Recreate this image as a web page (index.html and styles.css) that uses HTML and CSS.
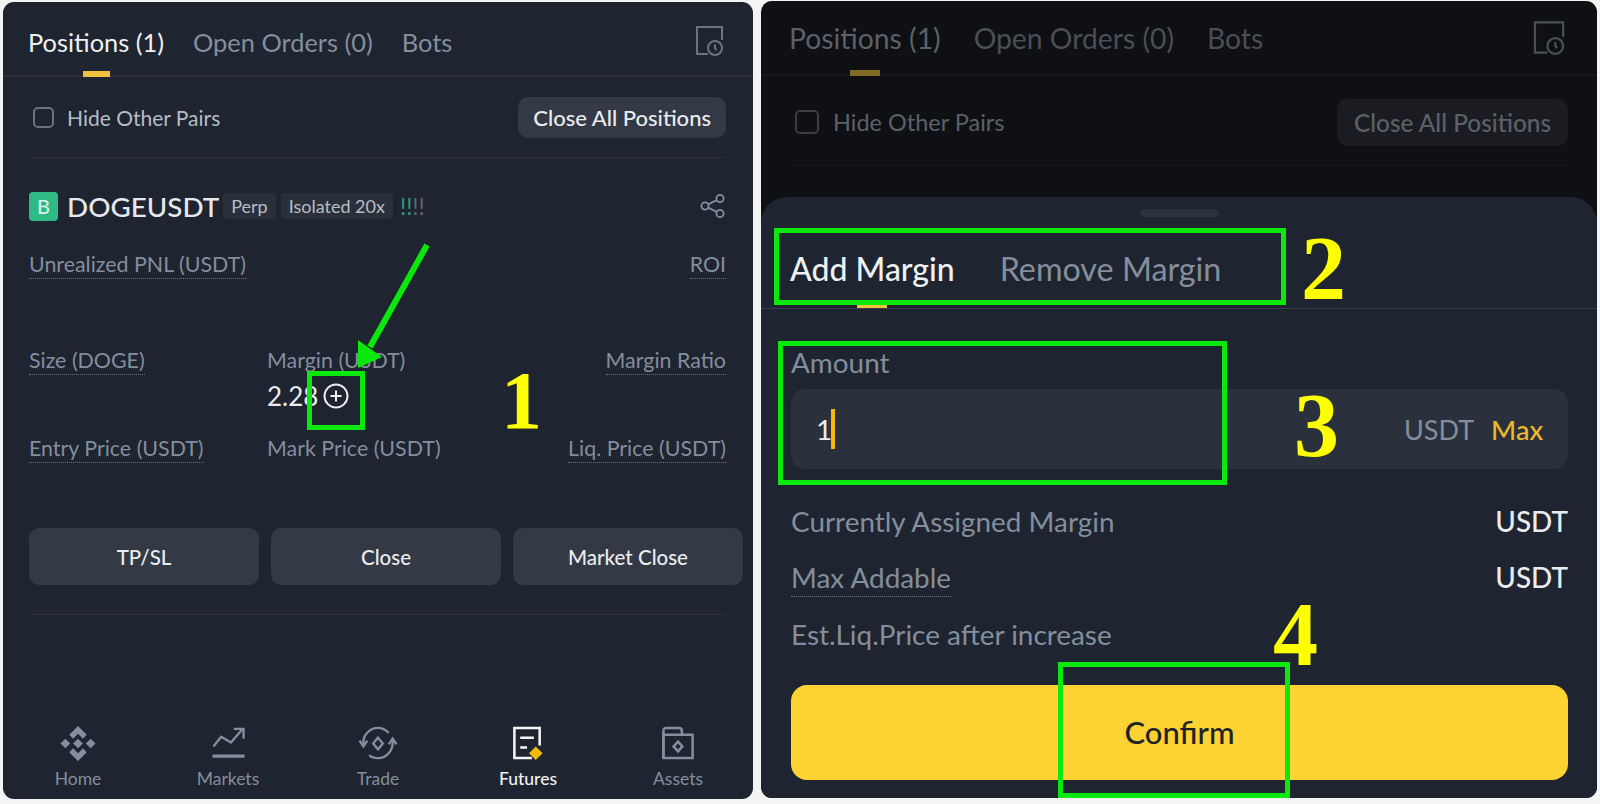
FILE: index.html
```html
<!DOCTYPE html>
<html lang="en">
	<head>
		<meta charset="UTF-8" />
		<title>Add margin to a futures position</title>
		<link rel="stylesheet" href="styles.css">
	</head>
	<body>
		<div class="shots">
			<!-- left phone: positions list -->
			<div class="panel panelLeft">
				<div class="tabs">
					<span class="tab active">Positions (1)</span>
					<span class="tab">Open Orders (0)</span>
					<span class="tab">Bots</span>
					<svg class="histIcon" width="28" height="31" viewBox="0 0 28 31" fill="none" stroke="#6b7380" stroke-width="2"><path d="M13 29H2V2H27V15"/><circle cx="20" cy="23" r="7"/><path d="M20 19.500v3.500l1.500 2"/></svg>
				</div>
				<div class="toolbar">
					<label class="hide"><span class="check"></span>Hide Other Pairs</label>
					<span class="closeAll">Close All Positions</span>
				</div>
				<div class="symbol">
					<span class="badge">B</span>
					<span class="pair">DOGEUSDT</span>
					<span class="tag">Perp</span>
					<span class="tag">Isolated 20x</span>
					<span class="risk"><i>!</i><i>!</i><b>!</b><b>!</b></span>
					<svg class="share" width="25" height="24" viewBox="0 0 25 24" fill="none" stroke="#848e9c" stroke-width="1.8"><circle cx="5" cy="12" r="3.6"/><circle cx="20" cy="4.5" r="3.6"/><circle cx="20" cy="19.5" r="3.6"/><path d="M8.2 10.4l8.6-4.3M8.2 13.6l8.6 4.3"/></svg>
				</div>
				<div class="stats">
					<div><span class="lbl dot">Unrealized PNL (USDT)</span></div>
					<div></div>
					<div class="right"><span class="lbl dot">ROI</span></div>
					<div><span class="lbl dot">Size (DOGE)</span></div>
					<div>
						<span class="lbl">Margin (USDT)</span>
						<div class="val">2.28<svg width="26" height="26" viewBox="0 0 26 26" fill="none" stroke="#eaecef" stroke-width="2"><circle cx="13" cy="13" r="11.5"/><path d="M13 7.5v11M7.5 13h11"/></svg></div>
					</div>
					<div class="right"><span class="lbl dot">Margin Ratio</span></div>
					<div><span class="lbl dot">Entry Price (USDT)</span></div>
					<div><span class="lbl">Mark Price (USDT)</span></div>
					<div class="right"><span class="lbl dot">Liq. Price (USDT)</span></div>
				</div>
				<div class="actions">
					<span class="action">TP/SL</span>
					<span class="action">Close</span>
					<span class="action">Market Close</span>
				</div>
				<div class="rule"></div>
				<div class="nav">
					<div class="navItem">
						<svg width="36" height="35" viewBox="0 0 36 36" fill="#848e9c"><path d="M18 0l9 9-4 4-5-5-5 5-4-4zM18 36l-9-9 4-4 5 5 5-5 4 4zM18 13l5 5-5 5-5-5zM5 13l5 5-5 5-5-5zM31 13l5 5-5 5-5-5z"/></svg>
						<span>Home</span>
					</div>
					<div class="navItem">
						<svg width="36" height="35" viewBox="0 0 36 36" fill="none" stroke="#848e9c" stroke-width="2.4"><path d="M3 21l8-10 10 6 12-14"/><path d="M24 3h10v10"/><path d="M2 31h33" stroke-width="3.2"/></svg>
						<span>Markets</span>
					</div>
					<div class="navItem">
						<svg width="40" height="35" viewBox="0 0 40 36" fill="none" stroke="#848e9c" stroke-width="2.4"><path d="M5 19C4 9 12 2 20 2c5 0 8 2 11 5"/><path d="M35 15c1 10-6 18-15 18-4 0-7-1-9-3"/><path d="M1 15l4 6 4-6M31 19l4-6 4 6"/><path d="M20 12l5 6-5 6-5-6z"/></svg>
						<span>Trade</span>
					</div>
					<div class="navItem on">
						<svg width="32" height="35" viewBox="0 0 32 36" fill="none" stroke="#f5f5f5" stroke-width="2.6"><path d="M20 33H2V2H28V20"/><path d="M8 12h14M8 22h7"/><path d="M24 21l7 7-7 7-7-7z" fill="#f0b90b" stroke="none"/></svg>
						<span>Futures</span>
					</div>
					<div class="navItem">
						<svg width="34" height="35" viewBox="0 0 34 36" fill="none" stroke="#848e9c" stroke-width="2.6"><path d="M2 33V5c0-2 1-3 3-3h13c2 0 3 1 3 3v4"/><path d="M2 9h30v24H2z"/><path d="M17 16l4.500 5-4.500 5-4.500-5z"/></svg>
						<span>Assets</span>
					</div>
				</div>
			</div>

			<!-- right phone: add margin sheet over the dimmed list -->
			<div class="panel panelRight">
				<div class="tabs">
					<span class="tab active">Positions (1)</span>
					<span class="tab">Open Orders (0)</span>
					<span class="tab">Bots</span>
					<svg class="histIcon" width="33" height="35" viewBox="0 0 28 31" fill="none" stroke="#4a4e55" stroke-width="2"><path d="M13 29H2V2H27V15"/><circle cx="20" cy="23" r="7"/><path d="M20 19.500v3.500l1.500 2"/></svg>
				</div>
				<div class="toolbar">
					<label class="hide"><span class="check"></span>Hide Other Pairs</label>
					<span class="closeAll">Close All Positions</span>
				</div>
				<div class="sheet">
					<div class="handle"></div>
					<div class="sheetTabs">
						<span class="sheetTab active">Add Margin</span>
						<span class="sheetTab">Remove Margin</span>
					</div>
					<div class="sheetBody">
						<div class="amountLbl">Amount</div>
						<div class="amount">
							<span class="typed">1</span><span class="caret"></span>
							<span class="unit">USDT</span>
							<span class="max">Max</span>
						</div>
						<div class="rows">
							<div class="row"><span>Currently Assigned Margin</span><b>USDT</b></div>
							<div class="row"><span class="dotted">Max Addable</span><b>USDT</b></div>
							<div class="row"><span>Est.Liq.Price after increase</span></div>
						</div>
						<div class="confirm">Confirm</div>
					</div>
				</div>
			</div>

			<!-- tutorial markup drawn over the screenshots -->
			<div class="mark box1"></div>
			<div class="mark box2"></div>
			<div class="mark box3"></div>
			<div class="mark box4"></div>
			<svg class="arrow" width="90" height="140" viewBox="0 0 90 140"><path d="M76 5L19 107" stroke="#0be80b" stroke-width="6"/><path d="M7 100L31 117 7 128z" fill="#0be80b"/></svg>
			<span class="num num1">1</span>
			<span class="num num2">2</span>
			<span class="num num3">3</span>
			<span class="num num4">4</span>
		</div>
	</body>
</html>
```

FILE: styles.css
```css
html, body {
	margin: 0;
	height: 804px;
	overflow: hidden;
	background-color: #f4f4f4;
	font-family: "Lato", "Liberation Sans", sans-serif;
}
.shots {
	position: relative;
	display: flex;
	align-items: flex-start;
	width: 1600px;
	height: 804px;
	padding: 1px 3px 0 3px;
	box-sizing: border-box;
	gap: 8px;
}
.panel {
	position: relative;
	overflow: hidden;
	display: flex;
	flex-direction: column;
	border-radius: 11px;
	box-sizing: border-box;
}
.panelLeft {
	width: 750px;
	height: 797px;
	margin-top: 1px;
	background-color: #1e2430;
	color: #848e9c;
}
.panelRight {
	width: 836px;
	height: 797px;
	background-color: #0e1014;
	color: #5c6067;
}

/* top tabs */
.tabs {
	display: flex;
	align-items: stretch;
	height: 75px;
	box-sizing: border-box;
	border-bottom: 2px solid #2b3039;
}
.tab {
	position: relative;
	display: flex;
	align-items: center;
	white-space: nowrap;
}
.tab.active::after {
	content: "";
	position: absolute;
	left: 50%;
	bottom: -2px;
	height: 6px;
}
.histIcon {
	margin-left: auto;
	align-self: center;
}
.panelLeft .tabs {
	padding: 6px 30px 0 25px;
	gap: 29px;
	font-size: 25.4px;
}
.panelLeft .tab.active {
	color: #eef0f2;
}
.panelLeft .tab.active::after {
	width: 27px;
	margin-left: -13px;
	background-color: #f0c33c;
}
.panelLeft .histIcon {
	margin-top: -2px;
}
.panelRight .tabs {
	padding: 0 32px 0 28px;
	gap: 33px;
	font-size: 28.3px;
	border-bottom-color: #16181d;
	color: #4a4e55;
}
.panelRight .tab.active {
	color: #5c6067;
}
.panelRight .tab.active::after {
	width: 30px;
	margin-left: -15px;
	background-color: #7f6b25;
}

/* hide pairs and close all */
.toolbar {
	display: flex;
	align-items: center;
	justify-content: space-between;
	box-sizing: border-box;
}
.hide {
	display: flex;
	align-items: center;
}
.check {
	box-sizing: border-box;
	border: 2px solid;
	border-radius: 5px;
}
.closeAll {
	font-weight: 500;
	white-space: nowrap;
}
.panelLeft .toolbar {
	height: 81px;
	margin: 0 27px 0 26px;
	padding-top: 1px;
	border-bottom: 1px solid #2b3039;
}
.panelLeft .hide {
	gap: 13px;
	padding-left: 4px;
	font-size: 21px;
	color: #b7bdc6;
}
.panelLeft .check {
	width: 21px;
	height: 21px;
	border-color: #6b7380;
}
.panelLeft .closeAll {
	padding: 0 15px;
	line-height: 41px;
	border-radius: 10px;
	font-size: 22px;
	color: #eaecef;
	background-color: #333945;
}
.panelRight .toolbar {
	height: 90px;
	margin: 0 29px;
	padding-top: 3px;
	border-bottom: 1px solid #16181d;
}
.panelRight .hide {
	gap: 14px;
	padding-left: 5px;
	font-size: 23.5px;
}
.panelRight .check {
	width: 24px;
	height: 24px;
	border-color: #3a3d43;
}
.panelRight .closeAll {
	padding: 0 17px;
	line-height: 47px;
	border-radius: 11px;
	font-size: 24.4px;
	background-color: #1a1c21;
}

/* position header */
.symbol {
	display: flex;
	align-items: center;
	height: 94px;
	box-sizing: border-box;
	padding: 2px 28px 0 26px;
}
.badge {
	width: 29px;
	height: 29px;
	margin-right: 9px;
	border-radius: 4px;
	font-size: 20px;
	font-weight: 500;
	line-height: 29px;
	text-align: center;
	color: #d6f5e6;
	background-color: #2fb985;
}
.pair {
	margin-right: 4px;
	font-size: 27.8px;
	font-weight: 500;
	color: #e6e8ec;
}
.tag {
	margin-right: 5px;
	padding: 0 8px;
	line-height: 26px;
	border-radius: 3px;
	font-size: 18px;
	color: #b7bdc6;
	background-color: #2a303a;
}
.risk {
	display: flex;
	gap: 0;
	margin-left: 2px;
	font-size: 23px;
	line-height: 26px;
}
.risk i {
	font-style: normal;
	color: #2f9a70;
}
.risk b {
	font-weight: 400;
	color: #5e6673;
}
.share {
	margin-left: auto;
}

/* stat grid */
.stats {
	display: grid;
	grid-template-columns: 238px 1fr auto;
	grid-template-rows: 96px 88px 92px;
	padding: 0 27px 0 26px;
}
.right {
	text-align: right;
}
.lbl {
	display: inline-block;
	font-size: 21.4px;
	line-height: 24px;
	padding-bottom: 2px;
	border-bottom: 1px dotted transparent;
}
.lbl.dot {
	border-bottom-color: #6b7380;
}
.val {
	display: flex;
	align-items: center;
	gap: 5px;
	margin-top: 7px;
	font-size: 26px;
	line-height: 28px;
	color: #eaecef;
}

/* action buttons */
.actions {
	display: grid;
	grid-template-columns: repeat(3, 230px);
	gap: 12px;
	padding-left: 26px;
}
.action {
	height: 57px;
	border-radius: 10px;
	font-size: 20.5px;
	font-weight: 500;
	line-height: 59px;
	text-align: center;
	color: #eaecef;
	background-color: #333945;
}
.rule {
	height: 1px;
	margin: 29px 27px 0 26px;
	background-color: #2b3039;
}

/* bottom nav */
.nav {
	display: grid;
	grid-template-columns: repeat(5, 150px);
	margin-top: auto;
	padding-bottom: 9px;
}
.navItem {
	display: flex;
	flex-direction: column;
	align-items: center;
	gap: 7px;
	font-size: 17.5px;
	line-height: 22px;
}
.navItem.on {
	font-weight: 500;
	color: #f0f1f3;
}

/* bottom sheet, sits over the dimmed list */
.sheet {
	position: absolute;
	left: 0;
	right: 0;
	top: 196px;
	bottom: 0;
	border-radius: 26px 26px 0 0;
	background-color: #1e2530;
}
.handle {
	width: 79px;
	height: 8px;
	margin: 12px auto 0;
	border-radius: 4px;
	background-color: #2b323d;
}
.sheetTabs {
	display: flex;
	align-items: stretch;
	gap: 45px;
	height: 92px;
	box-sizing: border-box;
	padding: 11px 29px 0;
	border-bottom: 1px solid #353c47;
	font-size: 32.3px;
	color: #848e9c;
}
.sheetTab {
	position: relative;
	display: flex;
	align-items: center;
}
.sheetTab.active {
	font-size: 32px;
	font-weight: 500;
	color: #eef0f2;
}
.sheetTab.active::after {
	content: "";
	position: absolute;
	left: 50%;
	bottom: 0;
	width: 30px;
	height: 3px;
	margin-left: -15px;
	background-color: #f0c33c;
}
.sheetBody {
	padding: 38px 29px 0 30px;
	font-size: 27.9px;
	color: #848e9c;
}
.amountLbl {
	line-height: 30px;
}
.amount {
	display: flex;
	align-items: center;
	height: 80px;
	margin-top: 12px;
	padding: 0 25px 0 25px;
	border-radius: 14px;
	background-color: #2b313c;
}
.typed {
	color: #eaecef;
}
.caret {
	width: 4px;
	height: 40px;
	margin-left: -1px;
	background-color: #f0b90b;
}
.unit {
	margin-left: auto;
	font-size: 27px;
}
.max {
	margin-left: 17px;
	font-size: 27px;
	font-weight: 500;
	color: #edb92a;
}
.rows {
	display: grid;
	grid-template-rows: 56px 57px 30px;
	margin-top: 37px;
}
.row {
	display: flex;
	justify-content: space-between;
	align-items: flex-start;
	line-height: 30px;
}
.row b {
	font-weight: 500;
	color: #eaecef;
}
.dotted {
	padding-bottom: 4px;
	border-bottom: 1px dotted #6b7380;
}
.confirm {
	height: 95px;
	margin-top: 36px;
	border-radius: 16px;
	font-size: 31px;
	font-weight: 500;
	line-height: 95px;
	text-align: center;
	color: #1e2329;
	background-color: #fdd333;
}

/* green boxes and yellow step numbers */
.mark {
	position: absolute;
	box-sizing: border-box;
	border: 5px solid #0be80b;
}
.box1 {
	left: 307px;
	top: 371px;
	width: 58px;
	height: 59px;
}
.box2 {
	left: 774px;
	top: 228px;
	width: 512px;
	height: 77px;
}
.box3 {
	left: 778px;
	top: 341px;
	width: 449px;
	height: 144px;
}
.box4 {
	left: 1058px;
	top: 662px;
	width: 232px;
	height: 136px;
}
.arrow {
	position: absolute;
	left: 351px;
	top: 240px;
}
.num {
	position: absolute;
	font-family: "Liberation Serif", serif;
	font-weight: 700;
	font-size: 90px;
	line-height: 90px;
	color: #ffff00;
}
.num1 {
	left: 501px;
	top: 360px;
	font-size: 82px;
	line-height: 82px;
}
.num2 {
	left: 1301px;
	top: 224px;
}
.num3 {
	left: 1294px;
	top: 381px;
}
.num4 {
	left: 1273px;
	top: 590px;
}
```
